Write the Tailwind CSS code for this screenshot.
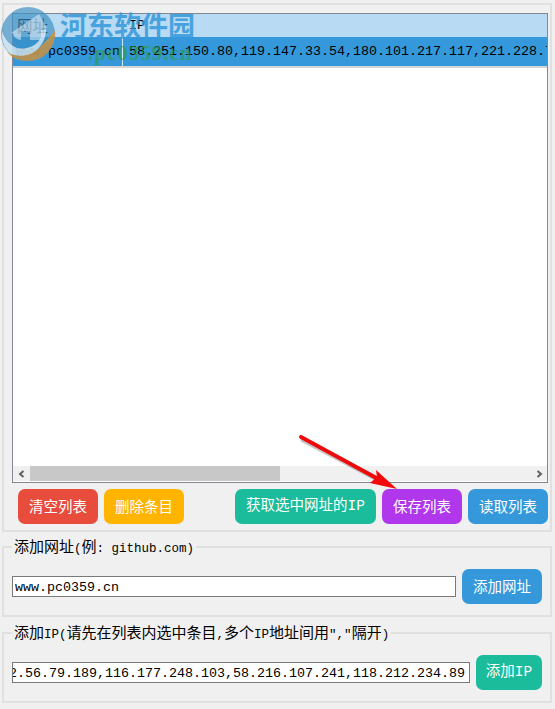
<!DOCTYPE html>
<html lang="zh">
<head>
<meta charset="utf-8">
<title>添加网址</title>
<script src="https://cdn.jsdelivr.net/npm/@tailwindcss/browser@4"></script>
</head>
<body class="relative w-[555px] h-[709px] overflow-hidden bg-[#f0f0f0] text-black font-['Liberation_Mono','Noto_Sans_CJK_SC',monospace]">

  <!-- list panel -->
  <section class="mx-[2px] mt-[3px] w-[550px] h-[529px] border-2 border-[#e0e0e0] pt-[8px] pl-[8px]">
    <div class="w-[536px] h-[470px] border border-[#828790] bg-white flex flex-col">
      <div class="h-[23px] shrink-0 bg-[#b8daf3] flex items-center text-[13.33px] leading-none">
        <span class="w-[110px] shrink-0 pl-[4px] text-[15.5px] font-['Noto_Sans_CJK_SC',sans-serif]">网址</span>
        <span class="pl-[6px]">IP</span>
      </div>
      <div class="h-[29px] shrink-0 bg-[#3498db] flex items-center text-[13.33px] leading-none whitespace-nowrap overflow-hidden">
        <span class="w-[110px] shrink-0 pl-[3px] border-r border-[#cfe6f7] h-full flex items-center">www.pc0359.cn</span>
        <span class="pl-[6px]">58.251.150.80,119.147.33.54,180.101.217.117,221.228.79.145</span>
      </div>
      <div class="h-[2px] shrink-0 bg-[#d5d5d5]"></div>
      <div class="flex-1"></div>
      <div class="h-[15px] shrink-0 bg-[#f0f0f0] flex items-center mb-[1px]">
        <div class="w-[17px] flex justify-center">
          <svg width="8" height="8" viewBox="0 0 8 8"><path d="M5.5 1 2 4l3.5 3" fill="none" stroke="#606060" stroke-width="2"/></svg>
        </div>
        <div class="w-[250px] h-full bg-[#c8c8c8]"></div>
        <div class="flex-1"></div>
        <div class="w-[17px] flex justify-center">
          <svg width="8" height="8" viewBox="0 0 8 8"><path d="M2.5 1 6 4 2.5 7" fill="none" stroke="#606060" stroke-width="2"/></svg>
        </div>
      </div>
    </div>
    <div class="mt-[6px] ml-[6px] flex h-[35px] text-white text-[14.5px] font-['Noto_Sans_CJK_SC',sans-serif]">
      <button class="w-[80px] pb-[2px] rounded-[7px] bg-[#e74c3c]">清空列表</button>
      <button class="w-[80px] pb-[2px] ml-[6px] rounded-[7px] bg-[#ffb400]">删除条目</button>
      <button class="w-[141px] pb-[2px] ml-[51px] rounded-[7px] bg-[#1abc9c]">获取选中网址的<span class="font-['Liberation_Mono',monospace]">IP</span></button>
      <button class="w-[80px] pb-[2px] ml-[6px] rounded-[7px] bg-[#b037ec]">保存列表</button>
      <button class="w-[80px] pb-[2px] ml-[6px] rounded-[7px] bg-[#3498db]">读取列表</button>
    </div>
  </section>

  <!-- add url -->
  <fieldset class="ml-[2px] mt-[5px] w-[550px] h-[80px] border-2 border-[#e0e0e0] pl-[8px] text-[12.5px]">
    <legend class="px-[2px] h-[20px] leading-[17px] whitespace-pre"><span class="text-[15px] font-['Noto_Sans_CJK_SC',sans-serif]">添加网址</span>(<span class="text-[15px] font-['Noto_Sans_CJK_SC',sans-serif]">例</span>: github.com)</legend>
    <div class="flex items-center mt-[12px]">
      <div class="w-[444px] h-[21px] border border-[#7a7a7a] bg-white pl-[2px] text-[13.33px] leading-[21px] whitespace-nowrap overflow-hidden">www.pc0359.cn</div>
      <button class="w-[80px] h-[35px] pb-[2px] ml-[6px] rounded-[7px] bg-[#3498db] text-white text-[14.5px] font-['Noto_Sans_CJK_SC',sans-serif]">添加网址</button>
    </div>
  </fieldset>

  <!-- add ip -->
  <fieldset class="ml-[2px] mt-[6px] w-[550px] h-[80px] border-2 border-[#e0e0e0] pl-[8px] text-[12.5px]">
    <legend class="px-[2px] h-[20px] leading-[17px] whitespace-pre"><span class="text-[15px] font-['Noto_Sans_CJK_SC',sans-serif]">添加</span>IP(<span class="text-[15px] font-['Noto_Sans_CJK_SC',sans-serif]">请先在列表内选中条目</span>,<span class="text-[15px] font-['Noto_Sans_CJK_SC',sans-serif]">多个</span>IP<span class="text-[15px] font-['Noto_Sans_CJK_SC',sans-serif]">地址间用</span>","<span class="text-[15px] font-['Noto_Sans_CJK_SC',sans-serif]">隔开</span>)</legend>
    <div class="flex items-center mt-[12px]">
      <div class="w-[458px] h-[21px] border border-[#7a7a7a] bg-white pr-[4px] text-[13.33px] leading-[21px] whitespace-nowrap overflow-hidden flex justify-end">202.56.79.189,116.177.248.103,58.216.107.241,118.212.234.89</div>
      <button class="w-[66px] h-[35px] pb-[2px] ml-[6px] rounded-[7px] bg-[#1abc9c] text-white text-[14.5px] font-['Noto_Sans_CJK_SC',sans-serif]">添加<span class="font-['Liberation_Mono',monospace]">IP</span></button>
    </div>
  </fieldset>

  <!-- watermark -->
  <svg class="absolute left-0 top-0" width="60" height="66" viewBox="0 0 60 66">
    <circle cx="28" cy="34" r="27" fill="#3b8fc4" fill-opacity=".68"/>
    <path d="M55 30c2 16-10 31-27 31-9 0-16-3-21-9 10 6 24 4 33-5 5-5 10-10 15-17z" fill="#d6923a" fill-opacity=".78"/>
    <path d="M2 31c-1 10 3 18 9 23 11 4 24 1 30-9 4-5 5-11 5-16l-5 1v8c-5 8-14 12-24 10C10 45 4 39 2 31z" fill="#fff" fill-opacity=".65"/>
    <path d="M11 33 39 14l8 14-6 1v11H30v-9H21v9c-4 0-7-3-8-7z" fill="#fff" fill-opacity=".45"/>
  </svg>
  <div class="absolute left-[60px] top-[7px] text-[27px] leading-[36px] font-bold text-[#3498db]/85 font-['Noto_Sans_CJK_SC',sans-serif] whitespace-nowrap">河东软件园</div>
  <div class="absolute left-[88px] top-[42px] text-[21px] leading-[22px] tracking-[1px] font-bold text-[#2e9a3e]/65 font-['Liberation_Serif',serif] whitespace-nowrap">.pc0359.cn</div>

  <!-- red arrow -->
  <svg class="absolute left-[295px] top-[430px]" width="106" height="64" viewBox="0 0 106 64">
    <path d="M8 10 L88 52" stroke="#000" stroke-opacity=".22" stroke-width="5" stroke-linecap="round"/>
    <path d="M6 7 L85 50" stroke="#ee0a0a" stroke-width="4" stroke-linecap="round"/>
    <path d="M102 59 L75 53 L82 47 L81 40z" fill="#f50808"/>
  </svg>
</body>
</html>
